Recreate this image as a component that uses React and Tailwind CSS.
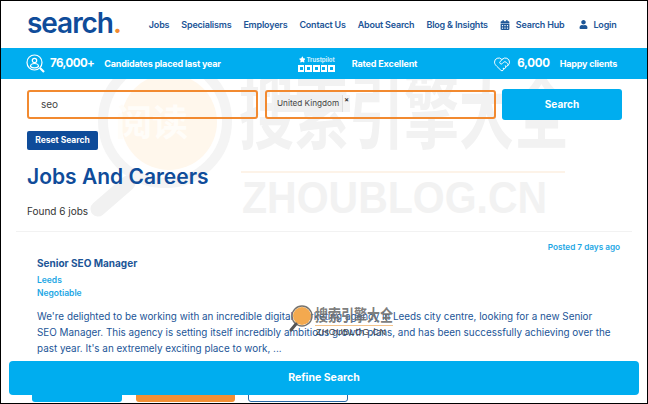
import { FaCalendarAlt, FaUser, FaStar } from "react-icons/fa";
import { HeartHandshake } from "lucide-react";

const navLinks = ["Jobs", "Specialisms", "Employers", "Contact Us", "About Search", "Blog & Insights"];

function SearchUserIcon() {
  return (
    <svg width="19" height="20" viewBox="0 0 19 20" fill="none" stroke="white" strokeWidth="1.2">
      <circle cx="8.5" cy="8.5" r="7.5" />
      <circle cx="8.5" cy="6.5" r="2.2" />
      <path d="M4.5 12.5c0-2 1.8-3 4-3s4 1 4 3c-1 1-2.4 1.4-4 1.4s-3-.4-4-1.4z" />
      <path d="M14 14l4 4" strokeWidth="2.2" />
    </svg>
  );
}

function TrustpilotBadge() {
  return (
    <div className="flex flex-col w-[37px]">
      <div className="flex items-center gap-[1px] h-[9px]">
        <FaStar className="text-white ml-[1px]" size={9} />
        <span className="text-[6px] text-white/80 leading-none">Trustpilot</span>
      </div>
      <div className="flex gap-[1px] mt-[1px]">
        {[0, 1, 2, 3, 4].map((i) => (
          <span key={i} className="w-[6.6px] h-[6.6px] bg-white flex items-center justify-center">
            <span className="w-[3px] h-[3px] bg-[#00adef]" />
          </span>
        ))}
      </div>
    </div>
  );
}

// the faint site stamp that sits across the page
function Watermark() {
  return (
    <div className="absolute inset-0 pointer-events-none overflow-hidden font-['Noto_Sans_CJK_SC',sans-serif]">
      <svg className="absolute left-[89px] top-0" width="160" height="145" viewBox="0 0 160 145" fill="none">
        <circle cx="75" cy="42" r="62" stroke="#f4f4f4" strokeWidth="10" />
        <circle cx="79" cy="43" r="48" fill="#fff7ec" />
        <path d="M38 104L8 130" stroke="#f1f1f1" strokeWidth="15" strokeLinecap="round" />
      </svg>
      <div className="absolute left-[115px] top-[16px] text-[36px] leading-[50px] font-bold text-[#fffdf9] whitespace-nowrap">
        阅读
      </div>
      <div className="absolute left-[238px] top-[-33px] origin-top scale-y-150 text-[55px] leading-[80px] font-bold text-[#f2f2f2] whitespace-nowrap">
        搜索引擎大全
      </div>
      <div className="absolute left-[240px] top-[92px] w-[324px] h-[2px] bg-[#fdf3e8]" />
      <div className="absolute left-[241px] top-[97px] origin-top scale-y-110 text-[41px] leading-[40px] font-bold text-[#f2f2f2] whitespace-nowrap font-['Liberation_Sans',sans-serif]">
        ZHOUBLOG.CN
      </div>
    </div>
  );
}

function SmallStamp() {
  return (
    <div className="absolute left-[288px] top-[304px] w-[106px] h-[34px] pointer-events-none">
      <svg className="absolute left-0 top-0" width="32" height="30" viewBox="0 0 32 30" fill="none">
        <circle cx="13" cy="11" r="9" fill="#f3a94f" />
        <circle cx="13" cy="11" r="10" stroke="#77736d" strokeWidth="1.4" />
        <path d="M7 19l-5 6" stroke="#555" strokeWidth="3" strokeLinecap="round" />
      </svg>
      <div className="absolute left-[26px] top-[-3px] origin-top scale-y-125 text-[13px] leading-[20px] font-bold text-[#6d6d6d]/90 whitespace-nowrap font-['Noto_Sans_CJK_SC',sans-serif]">
        搜索引擎大全
      </div>
      <div className="absolute left-[26px] top-[20px] w-[78px] h-[1px] bg-[#f3c48d]" />
      <div className="absolute left-[27px] top-[22px] text-[9px] leading-[11px] text-[#444] tracking-[0.4px] whitespace-nowrap font-['Liberation_Sans',sans-serif]">
        ZHOUBLOG.CN
      </div>
    </div>
  );
}

export default function App() {
  return (
    <div className="relative w-[648px] h-[404px] bg-white border border-black overflow-hidden font-['Inter',sans-serif]">
      {/* Header */}
      <header className="flex items-center h-[47px] pl-[26px]">
        <span className="text-[28px] leading-none font-semibold tracking-[-1.05px] text-[#0f4c9a] mb-[3px]">
          search<span className="text-[#f28a30]">.</span>
        </span>
        <nav className="flex items-center gap-3 ml-[28px] text-[9px] tracking-[-0.2px] font-semibold text-[#1c5597] whitespace-nowrap">
          {navLinks.map((link) => (
            <a key={link}>{link}</a>
          ))}
          <a className="flex items-center gap-[6px]">
            <FaCalendarAlt size={10} />
            Search Hub
          </a>
          <a className="flex items-center gap-[5px] ml-[3px]">
            <FaUser size={9} />
            Login
          </a>
        </nav>
      </header>

      {/* Stats bar */}
      <div className="flex items-center h-[31px] bg-[#00adef] text-white font-bold whitespace-nowrap pl-[25px]">
        <SearchUserIcon />
        <span className="ml-[5px] text-[11.5px] tracking-[-0.55px]">76,000+</span>
        <span className="ml-[10px] text-[9px] tracking-[-0.2px]">Candidates placed last year</span>
        <div className="ml-[77px]">
          <TrustpilotBadge />
        </div>
        <span className="ml-[17px] text-[9px] tracking-[-0.15px]">Rated Excellent</span>
        <HeartHandshake className="ml-[76px]" size={18} strokeWidth={1.3} />
        <span className="ml-[6px] text-[11.5px] tracking-[-0.3px]">6,000</span>
        <span className="ml-[10px] text-[9px] tracking-[-0.2px]">Happy clients</span>
      </div>

      {/* Main */}
      <main className="relative h-[324px]">
        <Watermark />
        <div className="relative">
          <div className="flex items-center gap-[7px] pl-[26px] pt-[10px]">
            <div className="flex items-center w-[231px] h-[29px] border-2 border-[#f28a30] rounded-[3px] pl-[12px] text-[10px] text-[#444]">
              seo
            </div>
            <div className="flex items-start w-[231px] h-[29px] border-2 border-[#f28a30] rounded-[3px] pl-[7px] pt-[3px]">
              <span className="flex items-center h-[17px] bg-[#f0f0f0] text-[8.2px] text-[#444] px-[3px]">
                United Kingdom
              </span>
              <span className="h-[17px] bg-[#f4f4f4] border-l border-[#ddd] text-[7px] font-bold leading-[9px] px-[1px] text-[#333]">
                ×
              </span>
            </div>
            <button className="w-[120px] h-[31px] ml-[-1px] bg-[#00adef] rounded-[3px] text-white text-[10px] font-bold">
              Search
            </button>
          </div>

          <button className="block ml-[26px] mt-[11px] w-[71px] h-[19px] bg-[#0f4c9a] rounded-[2px] text-white text-[8.5px] font-bold">
            Reset Search
          </button>

          <h1 className="ml-[26px] mt-[14px] text-[21px] leading-[26px] font-semibold text-[#0f4c9a]">Jobs And Careers</h1>

          <p className="ml-[26px] mt-[14px] text-[10px] leading-[14px] text-[#333]">Found 6 jobs</p>

          <div className="mx-[15px] mt-[13px] border-t border-[#f2f2f2]" />

          <div className="pl-[36px] pr-[27px] pt-[9px]">
            <p className="text-right text-[8.2px] leading-[12px] font-semibold text-[#1ba6e4]">Posted 7 days ago</p>
            <h2 className="mt-[3px] text-[10px] leading-[14px] font-bold text-[#1c5597]">Senior SEO Manager</h2>
            <p className="mt-[4px] text-[8.5px] leading-[13px] font-semibold text-[#1ba6e4]">Leeds</p>
            <p className="text-[8.5px] leading-[13px] font-semibold text-[#1ba6e4]">Negotiable</p>
            <p className="mt-[8px] w-[574px] text-[9.9px] leading-[16px] text-[#1c5597]">
              We're delighted to be working with an incredible digital marketing agency in Leeds city centre, looking for a new Senior SEO Manager. This agency is setting itself incredibly ambitious growth plans, and has been successfully achieving over the past year. It's an extremely exciting place to work, ...
            </p>
          </div>
        </div>
      </main>

      <SmallStamp />

      {/* Buttons peeking out under the sticky bar */}
      <div className="absolute left-[31px] top-[380px] w-[90px] h-[21px] bg-[#00adef] rounded-[3px]" />
      <div className="absolute left-[135px] top-[380px] w-[99px] h-[21px] bg-[#f28f35] rounded-[3px]" />
      <div className="absolute left-[247px] top-[380px] w-[100px] h-[21px] bg-white border border-[#2a6aa8] rounded-[3px]" />

      {/* Sticky refine bar */}
      <button className="absolute left-[8px] top-[360px] w-[630px] h-[34px] bg-[#00adef] rounded-[4px] text-white text-[10.5px] font-bold">
        Refine Search
      </button>
    </div>
  );
}
